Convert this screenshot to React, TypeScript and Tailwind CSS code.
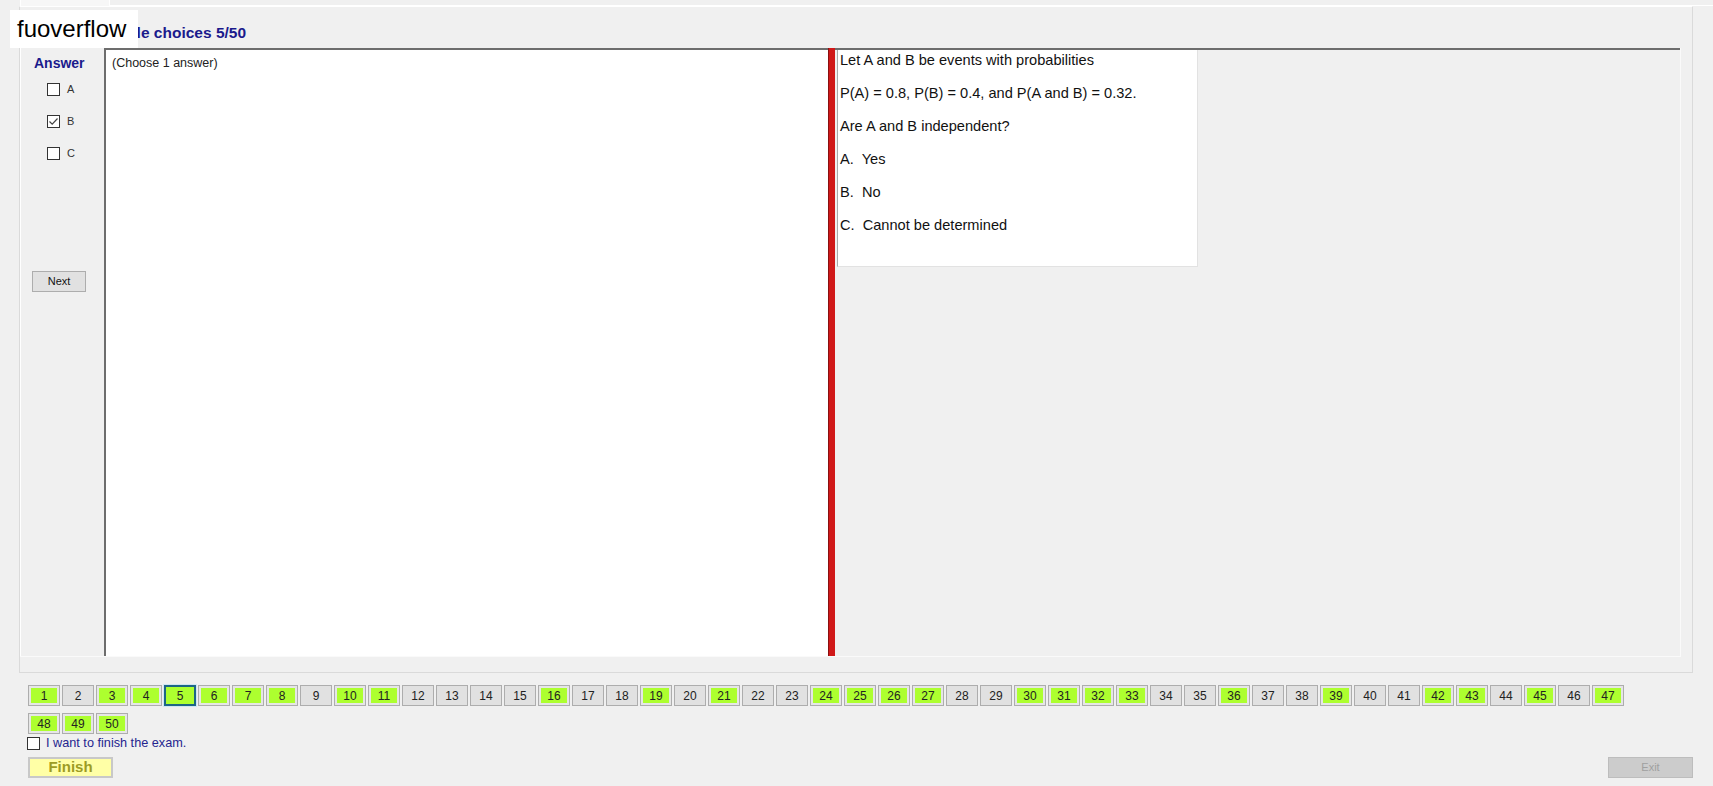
import React from 'react';

// questions already answered get the green fill
const answered = new Set([
  1, 3, 4, 5, 6, 7, 8, 10, 11, 16, 19, 21, 24, 25, 26, 27, 30, 31, 32, 33, 36, 39, 42, 43, 45, 47, 48, 49, 50,
]);
const current = 5;

const questionLines = [
  'Let A and B be events with probabilities',
  'P(A) = 0.8, P(B) = 0.4, and P(A and B) = 0.32.',
  'Are A and B independent?',
  'A.  Yes',
  'B.  No',
  'C.  Cannot be determined',
];

function CheckBox({ checked = false }: { checked?: boolean }) {
  return (
    <span className="flex h-[13px] w-[13px] items-center justify-center border border-[#333] bg-white">
      {checked && (
        <svg width="11" height="11" viewBox="0 0 11 11">
          <path d="M1.5 5.5 L4.2 8.2 L9.5 2.5" fill="none" stroke="#444" strokeWidth="1.2" />
        </svg>
      )}
    </span>
  );
}

function QuestionButton({ n }: { n: number }) {
  const done = answered.has(n);
  const selected = n === current;
  if (selected) {
    return (
      <div className="flex h-[21px] w-[32px] items-center justify-center border-2 border-[#1d6585] bg-[#adff2f] text-[12px] text-[#222] shadow-[0_0_0_1px_#cfe6f3]">
        {n}
      </div>
    );
  }
  return (
    <div
      className={
        done
          ? 'h-[21px] w-[32px] border border-[#adadad] bg-[#e6e6e6] p-[2px]'
          : 'h-[21px] w-[32px] border border-[#adadad] bg-[#e1e1e1]'
      }
    >
      <div
        className={
          done
            ? 'flex h-full w-full items-center justify-center bg-[#adff2f] text-[12px] text-[#222]'
            : 'flex h-full w-full items-center justify-center text-[12px] text-[#222]'
        }
      >
        {n}
      </div>
    </div>
  );
}

export default function App() {
  const numbers = Array.from({ length: 50 }, (_, i) => i + 1);

  return (
    <div className="relative h-[786px] w-[1713px] overflow-hidden bg-[#f0f0f0] font-['Liberation_Sans',Arial,sans-serif]">
      {/* tab strip */}
      <div className="flex h-[6px]">
        <div className="ml-[20px] w-[90px] border-x border-white bg-[#f7f7f7]" />
        <div className="flex-1 border-b border-white" />
      </div>

      {/* tab page */}
      <div className="ml-[19px] flex h-[667px] w-[1674px] flex-col border border-[#dadada] border-t-white">
        <div className="flex h-[41px] items-center pl-[71px] pt-[10px]">
          <span className="text-[15.5px] font-bold text-[#1a1a8c]">Multiple choices 5/50</span>
        </div>

        <div className="mr-[11px] flex h-[609px] border-b border-r border-[#fafafa]">
          {/* answer column */}
          <div className="relative w-[84px] shrink-0 border-l border-white">
            <div className="pl-[13px] pt-[5px] text-[14px] font-bold text-[#1a1a8c]">Answer</div>
            <div className="mt-[9px] flex flex-col gap-[19px] pl-[26px]">
              {['A', 'B', 'C'].map((l) => (
                <div key={l} className="flex h-[13px] items-center gap-[7px]">
                  <CheckBox checked={l === 'B'} />
                  <span className="text-[11px] text-[#333]">{l}</span>
                </div>
              ))}
            </div>
            <button className="ml-[11px] mt-[111px] flex h-[21px] w-[54px] items-center justify-center border border-[#adadad] bg-[#e1e1e1] text-[11px] text-[#111]">
              Next
            </button>
          </div>

          {/* answer sheet */}
          <div className="w-[724px] shrink-0 border-l-2 border-t-2 border-[#6d6d6d] bg-white pl-[6px]">
            <span className="text-[12.5px] leading-[15px] text-[#222]">(Choose 1 answer)</span>
          </div>

          {/* splitter */}
          <div className="w-[7px] shrink-0 border-l border-[#8a1010] bg-[#d01818]" />

          {/* question text */}
          <div className="flex-1 border-t-2 border-[#6d6d6d]">
            <div className="ml-[2px] flex h-[217px] w-[361px] flex-col gap-[17px] border-b border-l border-r border-[#a8a8a8] border-b-[#e2e2e2] border-r-[#e2e2e2] bg-white pl-[2px] pt-[2px]">
              {questionLines.map((t) => (
                <p key={t} className="whitespace-pre text-[14.6px] leading-[16px] text-[#111]">
                  {t}
                </p>
              ))}
            </div>
          </div>
        </div>
      </div>

      {/* navigation */}
      <div className="pl-[28px] pr-[20px] pt-[12px]">
        <div className="flex w-[1600px] flex-wrap gap-x-[2px] gap-y-[7px]">
          {numbers.map((n) => (
            <QuestionButton key={n} n={n} />
          ))}
        </div>
        <div className="-ml-[1px] mt-[2px] flex h-[15px] items-center gap-[6px]">
          <CheckBox />
          <span className="text-[12.7px] text-[#25258f]">I want to finish the exam.</span>
        </div>
        <div className="mt-[6px] flex items-center justify-between">
          <button className="flex h-[21px] w-[85px] items-center justify-center border-2 border-[#c8c8c8] bg-[#ffffa6] text-[15px] font-bold text-[#9c9c24]">
            Finish
          </button>
          <button className="flex h-[21px] w-[85px] items-center justify-center border border-[#bdbdbd] bg-[#cccccc] text-[11px] text-[#a0a0a0]">
            Exit
          </button>
        </div>
      </div>

      {/* watermark */}
      <div className="absolute left-[10px] top-[10px] flex h-[38px] w-[128px] items-center bg-white pl-[7px] text-[24px] text-black">
        fuoverflow
      </div>
    </div>
  );
}
